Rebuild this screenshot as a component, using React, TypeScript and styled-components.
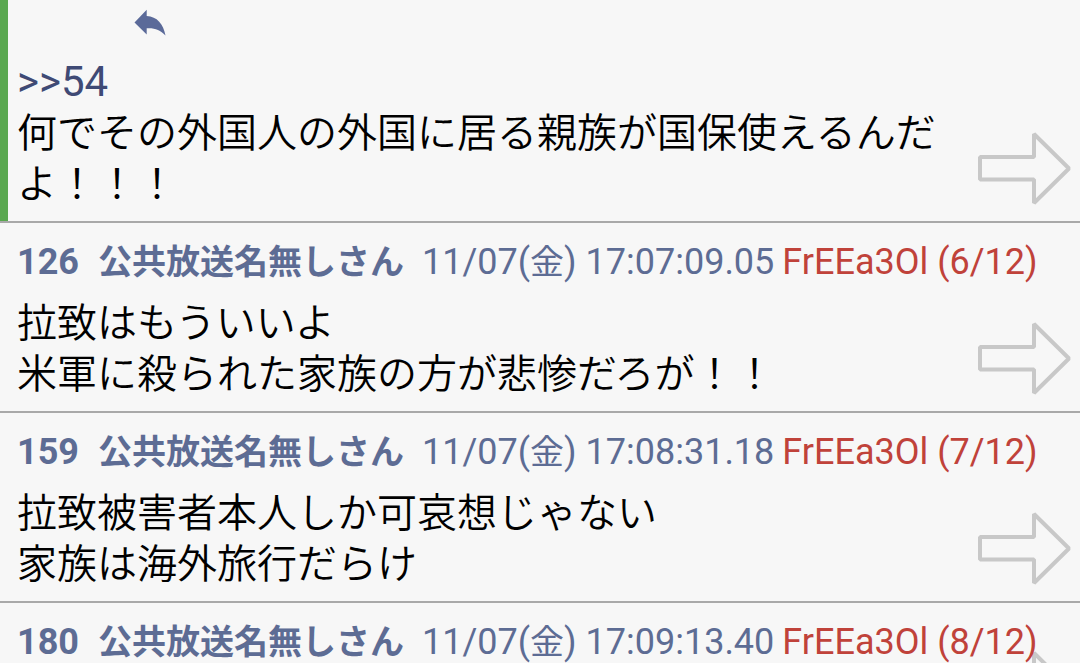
import React from "react";
import styled, { createGlobalStyle } from "styled-components";

const GlobalStyle = createGlobalStyle`
  * {
    box-sizing: border-box;
  }
  body {
    margin: 0;
    background: #f7f7f7;
  }
`;

const Thread = styled.main`
  height: 100vh;
  overflow: hidden;
  background: #f7f7f7;
  color: #000;
  font-family: Roboto, "Noto Sans CJK JP", sans-serif;
`;

const Post = styled.article<{ $marked?: boolean }>`
  position: relative;
  display: flex;
  flex-direction: column;
  padding: ${(p) => (p.$marked ? "9px 0 11px 9px" : "19px 0 11px 17px")};
  border-bottom: ${(p) => (p.$marked ? "0" : "2px solid #a9a9a9")};
`;

const MarkedRow = styled.div`
  display: grid;
  grid-template-columns: 8px 1fr;
  border-bottom: 2px solid #a9a9a9;
`;

const Mark = styled.div`
  background: #5aa850;
`;

const Meta = styled.header`
  display: flex;
  align-items: baseline;
  height: 40px;
  margin-bottom: 16px;
  font-size: 36px;
  line-height: 40px;
  white-space: pre;
  color: #5d6c94;
`;

const PostNumber = styled.span`
  font-weight: 700;
  margin-right: 19px;
`;

const Author = styled.span`
  font-size: 34px;
  font-weight: 700;
  margin-right: 18px;
`;

const Stamp = styled.time`
  margin-right: 8px;
`;

const Weekday = styled.span`
  font-size: 34px;
`;

const UserId = styled.span`
  color: #c0423a;
`;

const Body = styled.p`
  margin: 0;
  min-height: 51px;
  padding-right: 110px;
  font-size: 40px;
  line-height: 51px;
  font-weight: 350;
  white-space: pre-line;
`;

const Anchor = styled.a`
  color: #3f4a75;
  font-size: 42px;
  font-weight: 400;
  line-height: 50px;
  text-decoration: none;
`;

const ReplyRow = styled.div`
  display: flex;
  height: 48px;
  padding-left: 117px;
`;

const IconButton = styled.button`
  display: block;
  height: 27px;
  padding: 0;
  border: 0;
  background: none;
`;

const ArrowButton = styled.button`
  position: absolute;
  right: 9px;
  bottom: 16px;
  z-index: -1;
  width: 93px;
  height: 73px;
  padding: 0;
  border: 0;
  background: none;
`;

const Stack = styled.div`
  position: relative;
  z-index: 0;
`;

function NextArrow() {
  return (
    <ArrowButton type="button" aria-label="次へ">
      <svg width="93" height="73" viewBox="0 0 93 73" fill="none" stroke="#c8c8c8" strokeWidth="4">
        <path d="M2 25H56V2L91 36.500L56 71V47.500H2Z" strokeLinejoin="bevel" />
      </svg>
    </ArrowButton>
  );
}

function ReplyIcon() {
  return (
    <svg width="32" height="27" viewBox="0 0 32 27" fill="#5b6a99">
      <path d="M0.500 13.500L12.700 0.700V7C23 7.500 29.500 15 31.500 26.500C26 21 21 18.800 12.700 19.300V25.500Z" />
    </svg>
  );
}

interface PostData {
  no: number;
  time: string;
  count: string;
  text: string;
}

const posts: PostData[] = [
  { no: 126, time: "17:07:09.05", count: "6/12", text: "拉致はもういいよ\n米軍に殺られた家族の方が悲惨だろが！！" },
  { no: 159, time: "17:08:31.18", count: "7/12", text: "拉致被害者本人しか可哀想じゃない\n家族は海外旅行だらけ" },
  { no: 180, time: "17:09:13.40", count: "8/12", text: "" },
];

export default function App() {
  return (
    <Thread lang="ja">
      <GlobalStyle />
      <Stack>
        <MarkedRow>
          <Mark />
          <Post $marked>
            <ReplyRow>
              <IconButton type="button" aria-label="返信">
                <ReplyIcon />
              </IconButton>
            </ReplyRow>
            <Body>
              <Anchor href="#54">&gt;&gt;54</Anchor>
              <br />
              何でその外国人の外国に居る親族が国保使えるんだよ！！！
            </Body>
            <NextArrow />
          </Post>
        </MarkedRow>
        {posts.map((post) => (
          <Post key={post.no}>
            <Meta>
              <PostNumber>{post.no}</PostNumber>
              <Author>公共放送名無しさん</Author>
              <Stamp>
                11/07(<Weekday>金</Weekday>) {post.time}
              </Stamp>
              <UserId>FrEEa3Ol ({post.count})</UserId>
            </Meta>
            <Body>{post.text}</Body>
            <NextArrow />
          </Post>
        ))}
      </Stack>
    </Thread>
  );
}
